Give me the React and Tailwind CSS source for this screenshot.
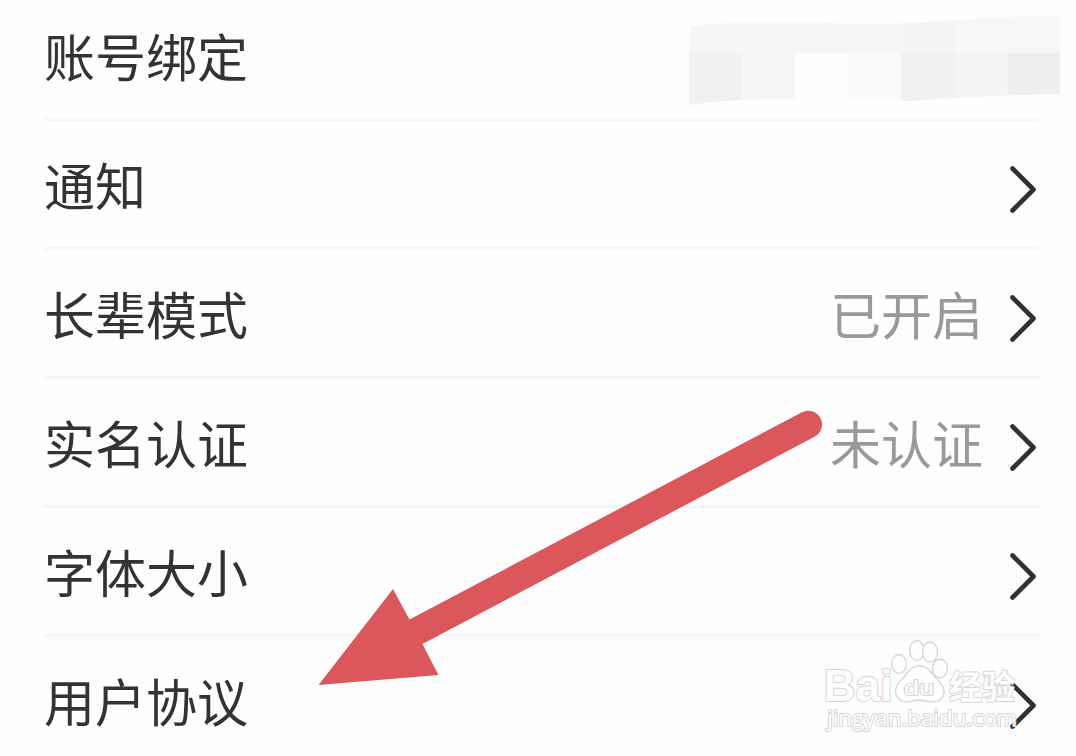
const settings = [
  { label: "账号绑定", masked: true },
  { label: "通知" },
  { label: "长辈模式", value: "已开启" },
  { label: "实名认证", value: "未认证" },
  { label: "字体大小" },
  { label: "用户协议" },
]

function Chevron() {
  return (
    <svg className="h-[50px] w-[30px] shrink-0" viewBox="0 0 30 50" fill="none">
      <path
        d="M3.500 4.500 24.500 25.500 3.500 46.500"
        stroke="#303030"
        strokeWidth="4.6"
        strokeLinecap="round"
        strokeLinejoin="round"
      />
    </svg>
  )
}

// Mosaic strip that hides the linked account
function MaskedValue() {
  return (
    <svg className="absolute left-[688px] top-[15px] h-[92px] w-[373px]" viewBox="688 15 373 92">
      <defs>
        <clipPath id="mask-strip">
          <path d="M689 27Q720 22 760 22Q810 22 860 24Q910 24 955 20Q1010 16 1060 16V94L1010 95.500Q960 97 910 101L865 100Q820 102 794 99Q735 98 689 105Z" />
        </clipPath>
      </defs>
      <g clipPath="url(#mask-strip)">
        <path d="M688 15H901V53H688Z" fill="#f6f6f6" />
        <path d="M901 15H954V53H901Z" fill="#f4f4f4" />
        <path d="M954 15H1061V53H954Z" fill="#f7f7f7" />
        <path d="M688 53H741V107H688Z" fill="#f0f0f0" />
        <path d="M741 53H795V107H741Z" fill="#f5f5f5" />
        <path d="M795 53H848V107H795Z" fill="#fefefe" />
        <path d="M848 53H901V107H848Z" fill="#fafafa" />
        <path d="M901 53H954V107H901Z" fill="#f1f1f1" />
        <path d="M954 53H1008V107H954Z" fill="#f4f4f4" />
        <path d="M1008 53H1061V107H1008Z" fill="#efefef" />
      </g>
    </svg>
  )
}

function SettingRow({ label, value, masked }) {
  return (
    <li className="flex h-[129px] items-center justify-between border-b-[3px] border-[#f6f6f6] pt-[10px]">
      <span className="-mt-[11px] text-[51px] leading-[70px] text-[#333333]">{label}</span>
      {masked ? (
        <MaskedValue />
      ) : (
        <div className="flex items-center gap-[26px]">
          {value && <span className="-mt-[11px] text-[51px] leading-[70px] text-[#999999]">{value}</span>}
          <Chevron />
        </div>
      )}
    </li>
  )
}

function Arrow() {
  return (
    <svg className="pointer-events-none absolute left-[310px] top-[400px] h-[295px] w-[520px]" viewBox="310 400 520 295">
      <path
        d="M318.500 685 393 589 409.500 619.500 801.500 412.500A13.700 13.700 0 0 1 815 436.500L422.500 644 438.500 675Z"
        fill="#db575c"
      />
    </svg>
  )
}

function Watermark() {
  return (
    <svg
      className="pointer-events-none absolute left-[820px] top-[636px] h-[104px] w-[210px] opacity-95"
      viewBox="820 636 210 104"
      fill="#ffffff"
      stroke="#d4d4d4"
      strokeWidth="1.300"
      strokeLinejoin="round"
    >
      <text
        className="font-['Liberation_Sans',sans-serif] font-bold"
        x="823.500"
        y="700.500"
        fontSize="45"
        textLength="69"
        lengthAdjust="spacingAndGlyphs"
        strokeWidth="2"
        paintOrder="stroke"
      >
        Bai
      </text>
      <ellipse cx="899" cy="664" rx="7.500" ry="9.500" />
      <ellipse cx="917" cy="650.500" rx="7.300" ry="10" />
      <ellipse cx="930" cy="652" rx="7.500" ry="10" />
      <ellipse cx="940" cy="668.500" rx="7.500" ry="9.500" />
      <path d="M919 665.500C911 666 908 672 904 677C899 683 894 687 896 694C898 702 906 703 912 701C917 700 922 700 927 701C934 703 942 702 944 694C945 687 940 683 935 677C930 671 927 666 919 665.500Z" />
      <text
        className="font-['Liberation_Sans',sans-serif]"
        x="904"
        y="695"
        fontSize="21"
        textLength="30"
        lengthAdjust="spacingAndGlyphs"
        strokeWidth="2"
        paintOrder="stroke"
      >
        du
      </text>
      <text
        className="font-['Noto_Sans_CJK_SC',sans-serif] font-bold"
        x="949"
        y="698.500"
        fontSize="33"
        strokeWidth="2"
        paintOrder="stroke"
      >
        经验
      </text>
      <text
        className="font-['Open_Sans',sans-serif]"
        x="827"
        y="726"
        fontSize="22"
        textLength="190"
        lengthAdjust="spacingAndGlyphs"
        strokeWidth="2"
        paintOrder="stroke"
      >
        jingyan.baidu.com
      </text>
    </svg>
  )
}

export default function App() {
  return (
    <main className="relative h-[756px] w-[1076px] overflow-hidden bg-[#fefefe] font-['Noto_Sans_CJK_SC',sans-serif]">
      <ul className="-mt-[8px] pl-[44px] pr-[37px]">
        {settings.map((item) => (
          <SettingRow key={item.label} {...item} />
        ))}
      </ul>
      <Arrow />
      <Watermark />
    </main>
  )
}
